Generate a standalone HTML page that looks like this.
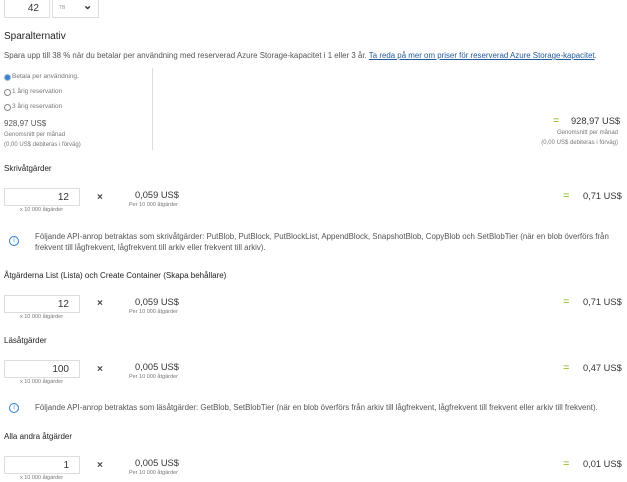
<!DOCTYPE html>
<html><head><meta charset="utf-8"><style>
body{margin:0;width:627px;height:479px;overflow:hidden;background:#fff;font-family:"Liberation Sans",sans-serif;color:#333;position:relative}
div,span{position:absolute;white-space:nowrap}
.s{font-size:6px;color:#777;line-height:8px}
.t{font-size:7.9px;color:#555;line-height:11px}
.h{font-size:8px;color:#222;line-height:10px}
.inp{border:1px solid #ddd;height:18px;width:76px;font-size:10px;line-height:18px;text-align:right;box-sizing:border-box;padding-right:10px;color:#333}
.eq{color:#7ab800;font-size:11px;line-height:12px}
.v{font-size:9.3px;line-height:12px;color:#333}
.x{font-size:10px;line-height:12px;color:#444;font-weight:bold}
.i{width:8px;height:8px;border:1px solid #2b7fd0;border-radius:50%;font-size:6px;line-height:8px;text-align:center;color:#2b7fd0}
.r{width:5px;height:5px;border:1px solid #888;border-radius:50%}
</style></head><body>
<div class="inp" style="left:4px;top:0;width:46px;height:18px;border-top:none">42</div>
<div style="left:52px;top:0;width:47px;height:18px;border:1px solid #ddd;border-top:none;box-sizing:border-box"><span style="left:6px;top:5px;font-size:5px;color:#999">TB</span><span style="left:30px;top:-2px;font-size:11px;line-height:16px;color:#333;font-weight:bold">&#8964;</span></div>
<div style="left:4px;top:31px;font-size:10px;line-height:12px;color:#222">Sparalternativ</div>
<div class="t" style="left:4px;top:50px">Spara upp till 38 % när du betalar per användning med reserverad Azure Storage-kapacitet i 1 eller 3 år. <span style="position:static;color:#245a9c;text-decoration:underline">Ta reda på mer om priser för reserverad Azure Storage-kapacitet</span>.</div>
<div style="left:4px;top:74px;width:5px;height:5px;border-radius:50%;background:#3b82d6;border:1px solid #9bc"></div>
<div class="s" style="left:12px;top:73px;font-size:6.5px">Betala per användning.</div>
<div class="r" style="left:4px;top:89px"></div><div class="s" style="left:12px;top:88px;font-size:6.5px">1 årig reservation</div>
<div class="r" style="left:4px;top:104px"></div><div class="s" style="left:12px;top:103px;font-size:6.5px">3 årig reservation</div>
<div style="left:4px;top:119px;font-size:8px;line-height:10px;color:#555">928,97 US$</div>
<div class="s" style="left:4px;top:131px">Genomsnitt per månad</div>
<div class="s" style="left:4px;top:141px">(0,00 US$ debiteras i förväg)</div>
<div style="left:152px;top:68px;width:1px;height:82px;background:#ddd"></div>
<div class="eq" style="left:553px;top:115px">=</div>
<div class="v" style="left:571px;top:115px">928,97 US$</div>
<div class="s" style="left:548px;top:129px;width:70px;text-align:right">Genomsnitt per månad</div>
<div class="s" style="left:500px;top:139px;width:118px;text-align:right">(0,00 US$ debiteras i förväg)</div>

<div class="h" style="left:4px;top:164px">Skrivåtgärder</div>
<div class="inp" style="left:4px;top:188px">12</div>
<div class="s" style="left:4px;top:206px;width:75px;text-align:center;font-size:5.5px">x 10 000 åtgärder</div>
<div class="x" style="left:97px;top:192px">×</div>
<div class="v" style="left:135px;top:189px">0,059 US$</div>
<div class="s" style="left:129px;top:201px;font-size:5.5px">Per 10 000 åtgärder</div>
<div class="eq" style="left:563px;top:190px">=</div>
<div class="v" style="left:583px;top:190px">0,71 US$</div>
<div class="i" style="left:9px;top:236px">i</div>
<div class="t" style="left:35px;top:231px">Följande API-anrop betraktas som skrivåtgärder: PutBlob, PutBlock, PutBlockList, AppendBlock, SnapshotBlob, CopyBlob och SetBlobTier (när en blob överförs från</div>
<div class="t" style="left:35px;top:242px">frekvent till lågfrekvent, lågfrekvent till arkiv eller frekvent till arkiv).</div>

<div class="h" style="left:4px;top:271px">Åtgärderna List (Lista) och Create Container (Skapa behållare)</div>
<div class="inp" style="left:4px;top:295px">12</div>
<div class="s" style="left:4px;top:313px;width:75px;text-align:center;font-size:5.5px">x 10 000 åtgärder</div>
<div class="x" style="left:97px;top:298px">×</div>
<div class="v" style="left:135px;top:296px">0,059 US$</div>
<div class="s" style="left:129px;top:308px;font-size:5.5px">Per 10 000 åtgärder</div>
<div class="eq" style="left:563px;top:296px">=</div>
<div class="v" style="left:583px;top:296px">0,71 US$</div>

<div class="h" style="left:4px;top:336px">Läsåtgärder</div>
<div class="inp" style="left:4px;top:360px">100</div>
<div class="s" style="left:4px;top:378px;width:75px;text-align:center;font-size:5.5px">x 10 000 åtgärder</div>
<div class="x" style="left:97px;top:364px">×</div>
<div class="v" style="left:135px;top:361px">0,005 US$</div>
<div class="s" style="left:129px;top:373px;font-size:5.5px">Per 10 000 åtgärder</div>
<div class="eq" style="left:563px;top:362px">=</div>
<div class="v" style="left:583px;top:362px">0,47 US$</div>
<div class="i" style="left:9px;top:403px">i</div>
<div class="t" style="left:35px;top:402px">Följande API-anrop betraktas som läsåtgärder: GetBlob, SetBlobTier (när en blob överförs från arkiv till lågfrekvent, lågfrekvent till frekvent eller arkiv till frekvent).</div>

<div class="h" style="left:4px;top:432px">Alla andra åtgärder</div>
<div class="inp" style="left:4px;top:456px">1</div>
<div class="s" style="left:4px;top:474px;width:75px;text-align:center;font-size:5.5px">x 10 000 åtgärder</div>
<div class="x" style="left:97px;top:460px">×</div>
<div class="v" style="left:135px;top:457px">0,005 US$</div>
<div class="s" style="left:129px;top:469px;font-size:5.5px">Per 10 000 åtgärder</div>
<div class="eq" style="left:563px;top:458px">=</div>
<div class="v" style="left:583px;top:458px">0,01 US$</div>
</body></html>
